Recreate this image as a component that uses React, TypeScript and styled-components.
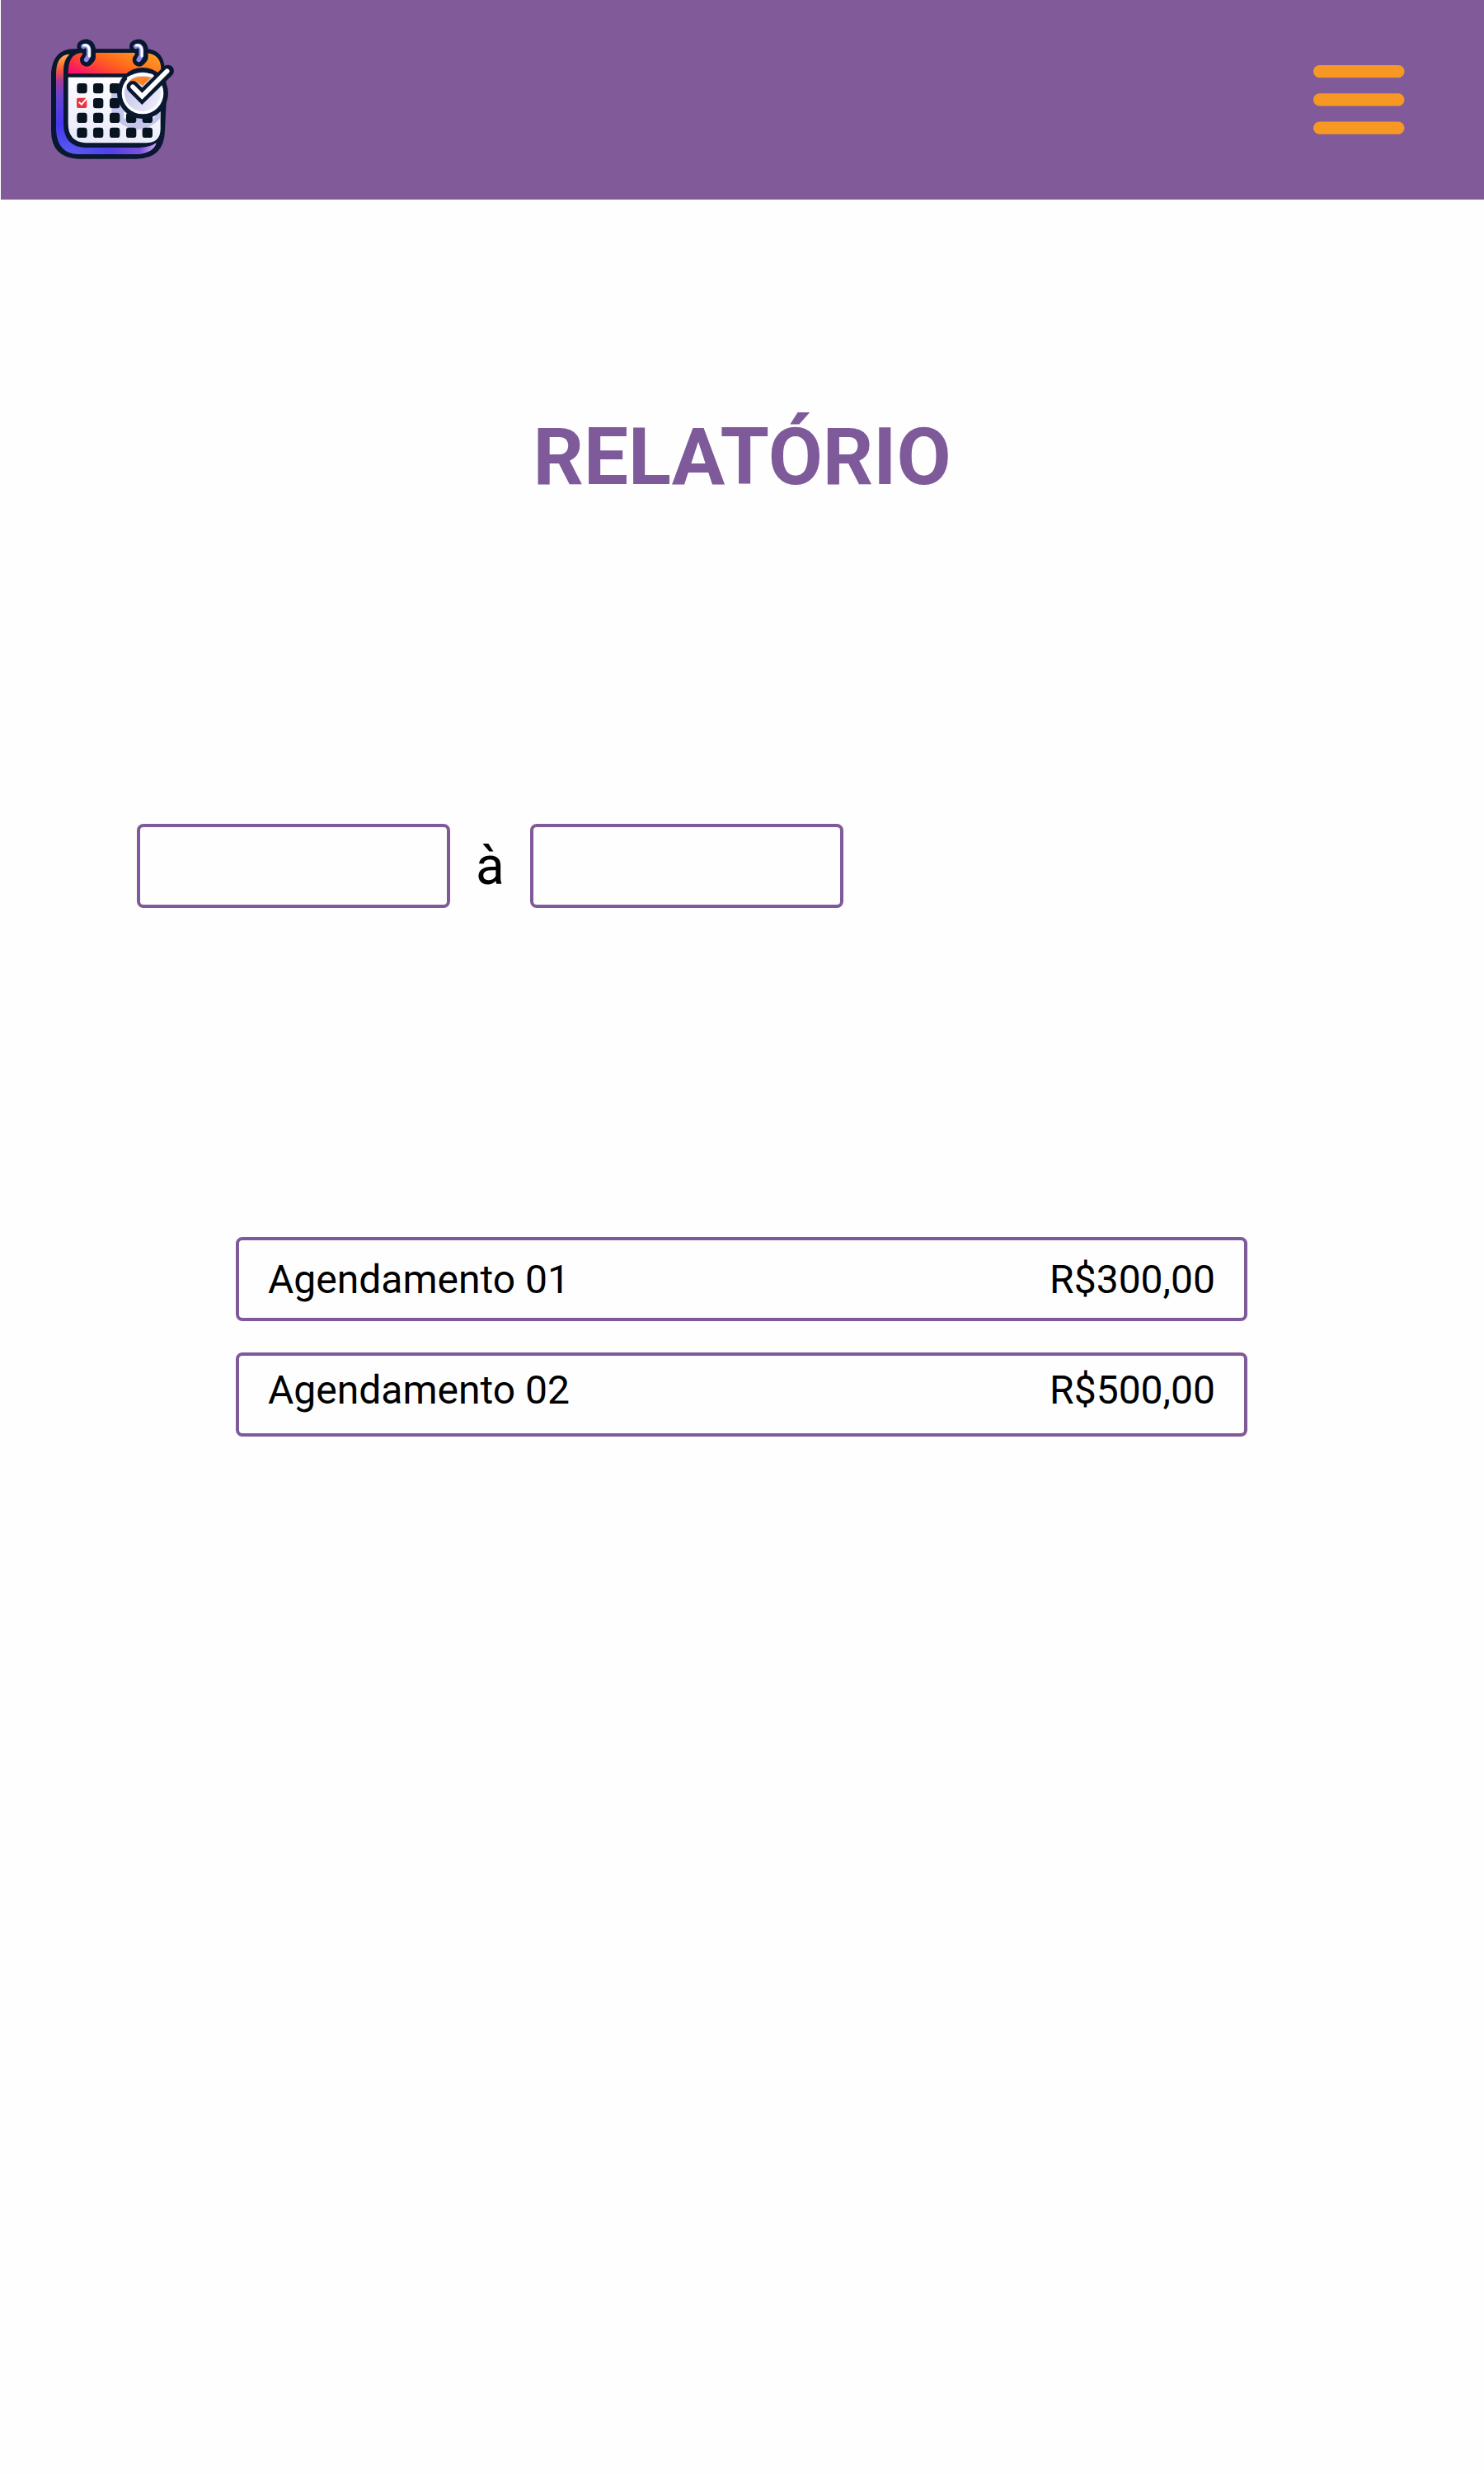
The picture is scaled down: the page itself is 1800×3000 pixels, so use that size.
import React from "react";
import styled, { createGlobalStyle } from "styled-components";

const PURPLE = "#7f5a9a";

const GlobalStyle = createGlobalStyle`
  *, *::before, *::after { box-sizing: border-box; }
  body {
    margin: 0;
    background: #fefefe;
    color: #000;
    font-family: Roboto, "Liberation Sans", sans-serif;
  }
`;

const Page = styled.div`
  width: 1800px;
  min-height: 3000px;
  display: flex;
  flex-direction: column;
`;

const Header = styled.header`
  height: 242px;
  margin-left: 1px;
  padding: 30px 96px 0 39px;
  display: flex;
  justify-content: space-between;
  align-items: flex-start;
  background: #815a99;
`;

const MenuButton = styled.button`
  margin: 49px 0 0;
  padding: 0;
  border: 0;
  background: none;
  line-height: 0;
  cursor: pointer;
`;

const Title = styled.h1`
  margin: 242px 0 0;
  font-size: 96px;
  font-weight: 700;
  line-height: 140px;
  text-align: center;
  color: ${PURPLE};
`;

const Period = styled.form`
  margin: 375px 0 0 166px;
  display: flex;
  align-items: center;
`;

const DateInput = styled.input`
  width: 380px;
  height: 102px;
  padding: 0 24px;
  border: 4px solid ${PURPLE};
  border-radius: 8px;
  background: transparent;
  font: 400 48px Roboto, sans-serif;
  outline: none;
`;

const Separator = styled.span`
  width: 97px;
  padding-top: 2px;
  font-size: 64px;
  line-height: 100px;
  text-align: center;
`;

const List = styled.ul`
  width: 1227px;
  margin: 399px 0 0 286px;
  padding: 0;
  display: flex;
  flex-direction: column;
  gap: 38px;
  list-style: none;
`;

const Item = styled.li<{ $lift: number }>`
  height: 102px;
  padding: 2px 35px ${(p) => p.$lift}px;
  display: flex;
  justify-content: space-between;
  align-items: center;
  border: 4px solid ${PURPLE};
  border-radius: 8px;
  font-size: 48px;
  line-height: 56px;
`;

const Logo = () => (
  <svg width="190" height="180" viewBox="0 0 570 540" aria-hidden="true">
    <defs>
      <linearGradient id="side" x1="0" y1="0" x2="0" y2="1">
        <stop offset="0" stopColor="#ffb060" />
        <stop offset="0.08" stopColor="#ff8a35" />
        <stop offset="0.17" stopColor="#f5503f" />
        <stop offset="0.27" stopColor="#a03a9c" />
        <stop offset="0.4" stopColor="#6a45c8" />
        <stop offset="0.7" stopColor="#4536f0" />
        <stop offset="1" stopColor="#5a5cf0" />
      </linearGradient>
      <linearGradient id="base" x1="0" y1="0" x2="1" y2="0">
        <stop offset="0" stopColor="#4a3cf4" stopOpacity="0" />
        <stop offset="0.45" stopColor="#5540ea" />
        <stop offset="0.8" stopColor="#7a52d8" />
        <stop offset="1" stopColor="#d9a6e8" />
      </linearGradient>
      <linearGradient id="top" x1="0" y1="0.8" x2="1" y2="0.3">
        <stop offset="0" stopColor="#fb0f6c" />
        <stop offset="0.25" stopColor="#ff3a3c" />
        <stop offset="0.55" stopColor="#ff6a1a" />
        <stop offset="1" stopColor="#ff9a24" />
      </linearGradient>
      <linearGradient id="sheet" x1="0.6" y1="0" x2="0.3" y2="1">
        <stop offset="0" stopColor="#ffffff" />
        <stop offset="1" stopColor="#e9eafa" />
      </linearGradient>
      <linearGradient id="disc" x1="0" y1="0.3" x2="1" y2="0.8">
        <stop offset="0" stopColor="#c5c7ec" />
        <stop offset="1" stopColor="#f0ecfa" />
      </linearGradient>
      <clipPath id="sheetClip">
        <path d="M128 190H464V378Q464 430 410 430H190Q128 425 128 360Z" />
      </clipPath>
    </defs>
    <path d="M148 88H415Q474 92 480 160L487 240L480 385Q478 488 375 488H165Q66 484 66 385V175Q72 90 148 88Z" fill="#0a1730" />
    <path d="M133 107Q84 110 84 178V382Q88 470 165 471H380Q438 467 449 430Q425 447 385 447H190Q112 444 111 360V165Q111 128 133 107Z" fill="url(#side)" />
    <path d="M150 448H385Q425 447 449 430Q438 467 380 471H165Z" fill="url(#base)" />
    <path d="M128 178Q127 103 180 102H405Q465 104 466 160V178Z" fill="url(#top)" />
    <path d="M128 191H464V378Q464 430 410 430H190Q128 425 128 360Z" fill="url(#sheet)" />
    <g clipPath="url(#sheetClip)">
      <path d="M285 250H330V340H440L464 300V340Q425 382 370 382Q310 368 286 318Z" fill="#c3c6ea" />
    </g>
    <g fill="#071420">
      {[160, 219, 279, 339, 398].map((x) =>
        [213, 267, 320, 374].map((y) =>
          (x === 160 && y === 267) || (x > 300 && y < 300) ? null : (
            <rect key={`${x}-${y}`} x={x} y={y} width="37" height="37" rx="10" />
          ),
        ),
      )}
    </g>
    <rect x="159" y="266" width="37" height="37" rx="6" fill="#ee3340" />
    <path d="M167 281L177 290L200 263" fill="none" stroke="#fff" strokeWidth="6" />
    <circle cx="399" cy="249" r="93" fill="#0a1730" />
    <circle cx="399" cy="249" r="76" fill="#fff" />
    <circle cx="399" cy="249" r="66" fill="url(#disc)" />
    <path d="M350 205Q378 182 430 192L400 222L375 206Z" fill="#ff8420" />
    <path d="M346 194Q372 176 433 184" fill="none" stroke="#fff" strokeWidth="9" strokeLinecap="round" />
    <path d="M363 226L397 260L491 168" fill="none" stroke="#0a1730" strokeWidth="44" strokeLinecap="round" strokeLinejoin="miter" />
    <path d="M363 226L397 260L488 169" fill="none" stroke="#fff" strokeWidth="17" strokeLinejoin="miter" strokeLinecap="round" />
    {[0, 191].map((dx) => (
      <g key={dx} transform={`translate(${dx} 0)`} fill="none" strokeLinecap="round" strokeLinejoin="round">
        <path d="M184 79Q200 71 204 88V118L195 128" stroke="#0a1730" strokeWidth="48" />
        <path d="M183 79Q200 71 203 90V112L194 127" stroke="#8a90ea" strokeWidth="17" />
        <path d="M185 75Q201 72 205 90V114" stroke="#fff" strokeWidth="9" />
      </g>
    ))}
  </svg>
);

const MenuIcon = () => (
  <svg width="111" height="86" viewBox="0 0 111 86" fill="#f79824" aria-hidden="true">
    <rect x="0" y="0" width="110.5" height="15.2" rx="7.5" />
    <rect x="0" y="34.3" width="110.5" height="15.2" rx="7.5" />
    <rect x="0" y="68.6" width="110.5" height="15.2" rx="7.5" />
  </svg>
);

const items = [
  { name: "Agendamento 01", value: "R$300,00", lift: 0 },
  { name: "Agendamento 02", value: "R$500,00", lift: 12 },
];

export default function App() {
  return (
    <Page>
      <GlobalStyle />
      <Header>
        <Logo />
        <MenuButton type="button" aria-label="Menu">
          <MenuIcon />
        </MenuButton>
      </Header>
      <main>
        <Title>RELATÓRIO</Title>
        <Period>
          <DateInput type="text" aria-label="Data inicial" />
          <Separator>à</Separator>
          <DateInput type="text" aria-label="Data final" />
        </Period>
        <List>
          {items.map((item) => (
            <Item key={item.name} $lift={item.lift}>
              <span>{item.name}</span>
              <span>{item.value}</span>
            </Item>
          ))}
        </List>
      </main>
    </Page>
  );
}
